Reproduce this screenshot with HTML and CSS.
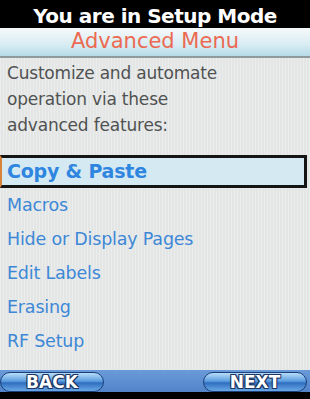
FILE: index.html
```html
<!DOCTYPE html>
<html lang="en">
<head>
  <meta charset="UTF-8" />
  <meta name="viewport" content="width=device-width, initial-scale=1" />
  <title>Advanced Menu</title>
  <link rel="stylesheet" href="styles.css">
</head>
<body>

  <div class="screen">
    <div class="mode">You are in Setup Mode</div>
    <div class="banner">Advanced Menu</div>

    <p class="desc">Customize and automate operation via these advanced features:</p>

    <ul class="menu">
      <li class="item selected">Copy &amp; Paste</li>
      <li class="item">Macros</li>
      <li class="item">Hide or Display Pages</li>
      <li class="item">Edit Labels</li>
      <li class="item">Erasing</li>
      <li class="item">RF Setup</li>
    </ul>

    <div class="softkeys">
      <div class="key">BACK</div>
      <div class="key">NEXT</div>
    </div>
  </div>

</body>
</html>
```

FILE: styles.css
```css
* {
  margin: 0; padding: 0; box-sizing: border-box;
}

body {
  background: #000;
  font-family: 'DejaVu Sans', sans-serif;
}

.screen {
  width: 310px;
  height: 399px;
  display: flex;
  flex-direction: column;
  background: #e4e6e6;
  background-image: repeating-linear-gradient(90deg, rgba(255,255,255,0.25) 0 1px, transparent 1px 3px);
}

.mode {
  height: 28px;
  background: #000;
  color: #fff;
  font-weight: bold;
  font-size: 20px;
  letter-spacing: -0.5px;
  text-align: center;
  padding-top: 5px;
  line-height: 22px;
}

.banner {
  height: 30px;
  background: linear-gradient(#f6f9fa, #d8ecf3 60%, #b6dbe8);
  border-bottom: 2px solid #8f9a9e;
  color: #ec6a52;
  font-size: 21px;
  text-align: center;
  line-height: 27px;
  letter-spacing: 0;
}

.desc {
  height: 97px;
  padding: 2px 7px 0;
  color: #505252;
  font-size: 17px;
  line-height: 26px;
  letter-spacing: -0.2px;
  width: 250px;
}

.menu {
  list-style: none;
  flex: 1;
}

.item {
  height: 34px;
  padding-left: 7px;
  color: #3d88d6;
  font-size: 17.5px;
  line-height: 34px;
  letter-spacing: -0.2px;
}

.item.selected {
  height: 33px;
  margin-right: 3px;
  border: 3px solid #151515;
  border-left: 2px solid #d8843a;
  background: #d5e9f2;
  color: #2f86e0;
  font-weight: bold;
  font-size: 19px;
  line-height: 26px;
  padding-left: 5px;
}

.softkeys {
  height: 29px;
  display: flex;
  justify-content: space-between;
  align-items: flex-start;
  background: linear-gradient(#000 0 0) bottom / 100% 7px no-repeat,
              linear-gradient(#6a9ad8, #4a7cc4);
  padding: 2px 3px 0 0;
}

.key {
  width: 104px;
  height: 20px;
  border-radius: 10px;
  background: linear-gradient(#b9dcf7, #5c9ee0 45%, #2f6ec0 55%, #6ba8e6);
  border: 1px solid #1b3f7a;
  color: #fff;
  font-weight: bold;
  font-size: 17px;
  line-height: 18px;
  text-align: center;
  text-shadow: 1px 1px 0 #1d3560, -1px -1px 0 #1d3560, 1px -1px 0 #1d3560, -1px 1px 0 #1d3560;
}
```
